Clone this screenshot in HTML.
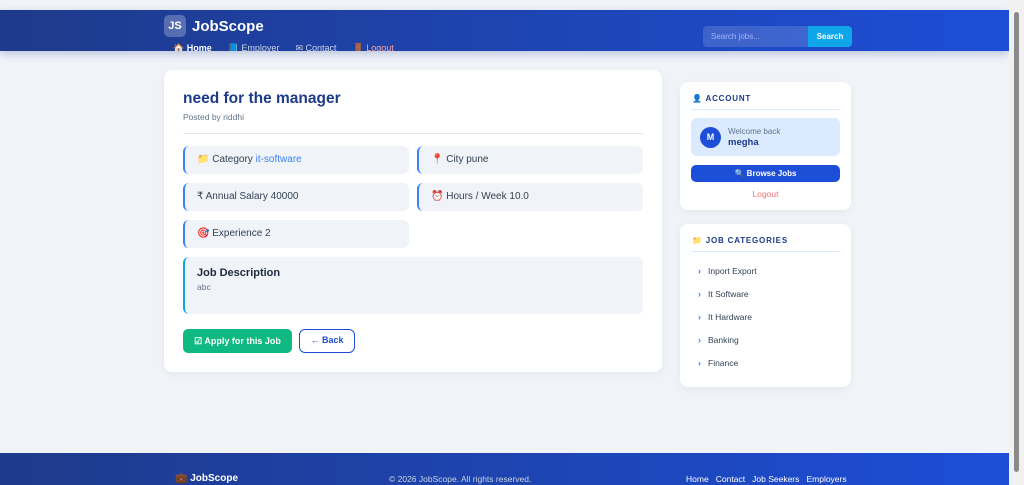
<!DOCTYPE html>
<html><head><meta charset="utf-8"><style>
*{box-sizing:border-box;margin:0;padding:0}
body{width:1024px;height:485px;overflow:hidden;background:#f0f3f8;font-family:"Liberation Sans",sans-serif;position:relative;color:#334155}
.sb{position:absolute;right:0;top:0;width:15px;height:485px;background:#f1f1f1}
.sb div{position:absolute;left:5px;top:12px;width:5px;height:460px;background:#8a8a8a;border-radius:3px}
header{position:absolute;left:0;top:10px;width:1009px;height:41px;background:linear-gradient(90deg,#1e3a8a,#1d4ed8);box-shadow:0 3px 8px rgba(30,58,138,.25);overflow:hidden}
.logo{position:absolute;left:164px;top:5px;width:22px;height:22px;border-radius:5px;background:rgba(255,255,255,.25);color:#fff;font-weight:bold;font-size:11px;text-align:center;line-height:22px}
.brand{position:absolute;left:192px;top:8px;color:#fff;font-weight:bold;font-size:15px}
nav{position:absolute;left:173px;top:33px;font-size:9px;color:#cbd5e1;white-space:nowrap}
nav span{margin-right:16px}
.srch{position:absolute;left:703px;top:16px;width:105px;height:21px;background:rgba(255,255,255,.15);border-radius:4px 0 0 4px;color:#a5b4fc;font-size:8px;line-height:21px;padding-left:8px}
.sbtn{position:absolute;left:808px;top:16px;width:44px;height:21px;background:#0ea5e9;border-radius:0 4px 4px 0;color:#fff;font-size:8px;font-weight:bold;text-align:center;line-height:21px}
.card{position:absolute;background:#fff;border-radius:8px;box-shadow:0 2px 8px rgba(0,0,0,.05)}
h1{position:absolute;left:183px;top:90px;font-size:15.5px;color:#1e3a8a}
.by{position:absolute;left:183px;top:112px;font-size:8.5px;color:#64748b}
.hr{position:absolute;height:1px;background:#e2e8f0}
.f{position:absolute;background:#f0f3f8;border-radius:6px;border-left:2px solid #3b82f6;font-size:10px;color:#334155;line-height:28px;padding-left:12px}
.btn{position:absolute;border-radius:5px;font-size:9px;font-weight:bold;text-align:center}
.side h3{font-size:8px;color:#1e3a8a;letter-spacing:.8px}
.cat{position:absolute;left:698px;font-size:8.5px;color:#334155}
.cat b{color:#3b82f6;margin-right:7px;font-size:9px}
footer{position:absolute;left:0;top:453px;width:1009px;height:32px;background:linear-gradient(90deg,#1e3a8a,#1d4ed8);color:#fff;font-size:8.5px}
</style></head><body>
<header>
<div class="logo">JS</div><div class="brand">JobScope</div>
<nav><span style="color:#fff;font-weight:bold">🏠 Home</span><span>📘 Employer</span><span>✉ Contact</span><span style="color:#fca5a5">🚪 Logout</span></nav>
<div class="srch">Search jobs...</div><div class="sbtn">Search</div>
</header>
<div class="card" style="left:164px;top:70px;width:498px;height:302px"></div>
<h1>need for the manager</h1>
<div class="by">Posted by riddhi</div>
<div class="hr" style="left:183px;top:133px;width:460px"></div>
<div class="f" style="left:183px;top:146px;width:226px">📁 Category <span style="color:#3b82f6">it-software</span></div>
<div class="f" style="left:417px;top:146px;width:226px">📍 City pune</div>
<div class="f" style="left:183px;top:183px;width:226px">₹ Annual Salary 40000</div>
<div class="f" style="left:417px;top:183px;width:226px">⏰ Hours / Week 10.0</div>
<div class="f" style="left:183px;top:220px;width:226px">🎯 Experience 2</div>
<div class="f" style="left:183px;top:257px;width:460px;height:57px;border-left-color:#0ea5e9;line-height:normal;padding-top:10px"><div style="font-weight:bold;font-size:11px;color:#1e293b">Job Description</div><div style="font-size:8.5px;color:#64748b;margin-top:3px">abc</div></div>
<div class="btn" style="left:183px;top:329px;width:109px;height:24px;background:#10b981;color:#fff;line-height:24px">☑ Apply for this Job</div>
<div class="btn" style="left:299px;top:329px;width:56px;height:24px;border:1.5px solid #1d4ed8;border-radius:6px;color:#1d4ed8;line-height:21px">← Back</div>

<div class="card side" style="left:680px;top:82px;width:171px;height:128px"><h3 style="position:absolute;left:12px;top:12px">👤 ACCOUNT</h3></div>
<div class="hr" style="left:691px;top:109px;width:149px;background:#dbeafe"></div>
<div style="position:absolute;left:691px;top:118px;width:149px;height:38px;background:#dbeafe;border-radius:6px"></div>
<div style="position:absolute;left:700px;top:127px;width:21px;height:21px;border-radius:50%;background:#1d4ed8;color:#fff;font-size:9px;font-weight:bold;text-align:center;line-height:21px">M</div>
<div style="position:absolute;left:728px;top:127px;font-size:8px;color:#64748b">Welcome back</div>
<div style="position:absolute;left:728px;top:137px;font-size:9.5px;font-weight:bold;color:#1e3a8a">megha</div>
<div class="btn" style="left:691px;top:165px;width:149px;height:17px;background:#1d4ed8;color:#fff;line-height:17px;font-size:8px">🔍 Browse Jobs</div>
<div style="position:absolute;left:691px;top:189px;width:149px;text-align:center;font-size:8.5px;color:#f87171">Logout</div>

<div class="card side" style="left:680px;top:224px;width:171px;height:163px"><h3 style="position:absolute;left:12px;top:12px">📁 JOB CATEGORIES</h3></div>
<div class="hr" style="left:691px;top:251px;width:149px;background:#dbeafe"></div>
<div class="cat" style="top:266px"><b>›</b>Inport Export</div>
<div class="cat" style="top:289px"><b>›</b>It Software</div>
<div class="cat" style="top:312px"><b>›</b>It Hardware</div>
<div class="cat" style="top:335px"><b>›</b>Banking</div>
<div class="cat" style="top:358px"><b>›</b>Finance</div>

<footer>
<div style="position:absolute;left:175px;top:20px;font-weight:bold;font-size:10px">💼 JobScope</div>
<div style="position:absolute;left:389px;top:21px;color:#cbd5e1">© 2026 JobScope. All rights reserved.</div>
<div style="position:absolute;left:686px;top:21px">Home&nbsp;&nbsp; Contact&nbsp;&nbsp; Job Seekers&nbsp;&nbsp; Employers</div>
</footer>
<div class="sb"><div></div></div>
</body></html>
